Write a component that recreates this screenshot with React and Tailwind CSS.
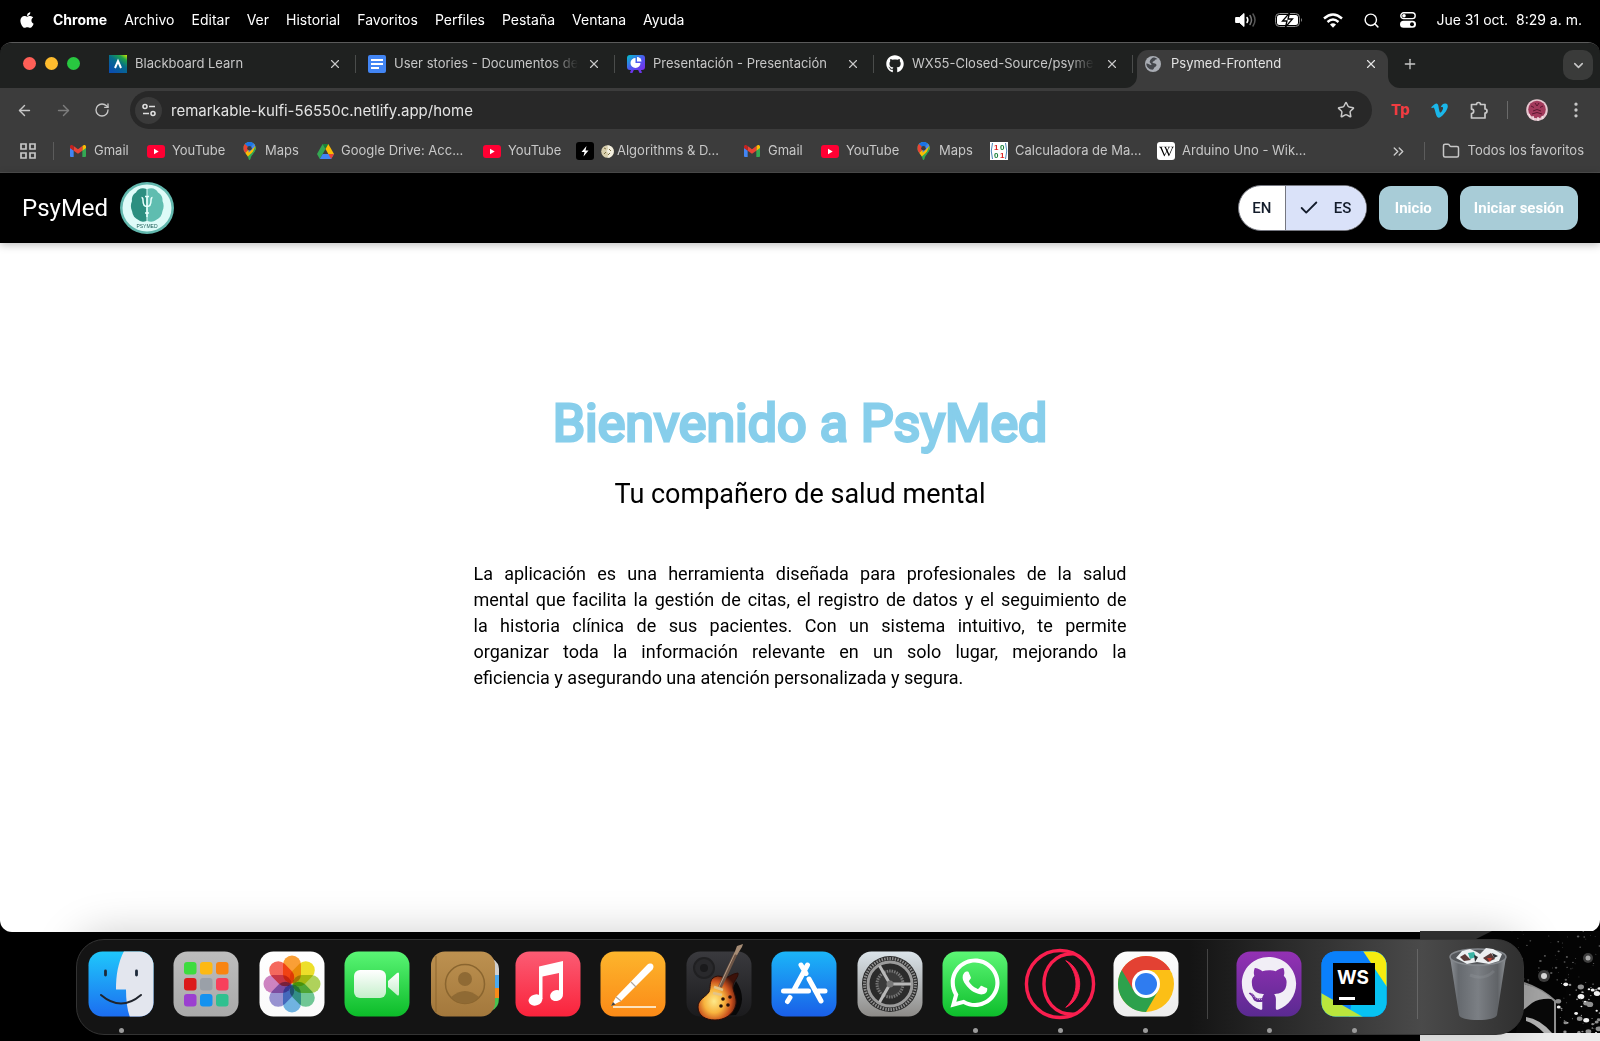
import { FaApple, FaGithub, FaWhatsapp, FaVimeoV, FaWikipediaW } from "react-icons/fa";
import { ArrowLeft, ArrowRight, Check, ChevronDown, ChevronsRight, EllipsisVertical, Folder, Plus, RotateCw, Search, Star, X } from "lucide-react";

/* ---------- small brand marks ---------- */

const Gmail = () => (
  <svg viewBox="0 0 24 18" className="w-4 h-3">
    <path d="M0 3v13.500a1.500 1.500 0 0 0 1.500 1.500H5.500V8L0 4z" fill="#4285f4" />
    <path d="M18.500 18h4a1.500 1.500 0 0 0 1.500-1.500V3l-5.500 4z" fill="#34a853" />
    <path d="M18.500 1.500V8.500L24 4.400V2.500C24 .2 21.500-.8 19.700.6z" fill="#fbbc04" />
    <path d="M5.500 8.500v-7L12 6.300l6.500-4.800v7L12 13.300z" fill="#ea4335" />
    <path d="M0 2.500v1.900l5.500 4.100v-7L4.300.6C2.500-.8 0 .2 0 2.500z" fill="#c5221f" />
  </svg>
);

const YouTube = () => (
  <svg viewBox="0 0 18 13" className="w-[18px] h-[13px]">
    <rect width="18" height="13" rx="3" fill="#ff0033" />
    <path d="M7 3.800v5.400l4.700-2.700z" fill="#fff" />
  </svg>
);

const Maps = () => (
  <svg viewBox="0 0 14 20" className="w-[13px] h-[18px]">
    <clipPath id="pin">
      <path d="M7 0a7 7 0 0 1 7 7c0 4-3.500 5.500-5.500 10-.5 1.200-.5 3-1.500 3s-1-1.800-1.500-3C3.500 12.500 0 11 0 7a7 7 0 0 1 7-7z" />
    </clipPath>
    <g clipPath="url(#pin)">
      <rect width="14" height="20" fill="#34a853" />
      <path d="M0 14L14 1v7L3 18z" fill="#fbbc04" />
      <path d="M6 8l7-7 1 3-8 8z" fill="#4285f4" />
      <path d="M0 0h14L7 7z" fill="#4285f4" />
      <path d="M0 0l7 7-6 7-1-3z" fill="#ea4335" />
      <path d="M2 2l5 5 6-7H5z" fill="#1a73e8" />
      <path d="M14 3v6l-7 11z" fill="#34a853" />
    </g>
    <circle cx="7" cy="7" r="2.500" fill="#3c3c3c" />
  </svg>
);

const Drive = () => (
  <svg viewBox="0 0 24 21" className="w-[17px] h-[15px]">
    <path d="M8 0h8l-4 7z" fill="#188038" />
    <path d="M8 0L0 14l4 7 8-14z" fill="#34a853" />
    <path d="M16 0l8 14h-8L12 7z" fill="#fbbc04" />
    <path d="M8 14h16l-4 7H4z" fill="#4285f4" />
    <path d="M16 14h8l-4 7z" fill="#ea4335" />
  </svg>
);

const Bolt = () => (
  <svg viewBox="0 0 18 18" className="w-[18px] h-[18px]">
    <rect width="18" height="18" rx="3" fill="#000" />
    <path d="M10.500 4L5.500 10h3l-1 4.500 5-6h-3z" fill="#fff" />
  </svg>
);

const Matrix = () => (
  <svg viewBox="0 0 18 18" className="w-[18px] h-[18px]" fontFamily="Liberation Sans" fontSize="8" fontWeight="700">
    <rect width="18" height="18" fill="#fff" />
    <path d="M2.500 1Q0 9 2.500 17M15.500 1Q18 9 15.500 17" stroke="#4b86b8" fill="none" />
    <text x="4" y="8" fill="#d22">1</text>
    <text x="10" y="8" fill="#188038">0</text>
    <text x="4" y="16" fill="#188038">0</text>
    <text x="10" y="16" fill="#d22">1</text>
  </svg>
);

const Wiki = () => (
  <span className="flex w-[18px] h-[18px] items-center justify-center rounded-[3px] bg-white text-black">
    <FaWikipediaW size={15} />
  </span>
);

const Coin = () => (
  <svg viewBox="0 0 13 13" className="w-[13px] h-[13px] shrink-0">
    <circle cx="6.500" cy="6.500" r="6.300" fill="#d8cfae" />
    <path d="M6.500 .2a6.300 6.300 0 0 1 0 12.600L7.500 9l-2-3 1.500-2z" fill="#f4f0e0" />
    <path d="M3 3l2 1M3 9l2-2M8 4l2 2M7 10l2-2" stroke="#7d7145" />
  </svg>
);

/* ---------- tab icons ---------- */

const Blackboard = () => (
  <svg viewBox="0 0 18 18" className="w-[18px] h-[18px]">
    <defs>
      <linearGradient id="bb" x1="1" y1="0" x2="0.300" y2="1">
        <stop offset="0" stopColor="#d7e600" />
        <stop offset=".22" stopColor="#1fa34a" />
        <stop offset=".5" stopColor="#066d8a" />
        <stop offset="1" stopColor="#0a4fae" />
      </linearGradient>
    </defs>
    <rect width="18" height="18" fill="url(#bb)" />
    <path d="M6 13L9 6l3 7" stroke="#fff" strokeWidth="2" fill="none" />
  </svg>
);

const Docs = () => (
  <svg viewBox="0 0 18 18" className="w-[18px] h-[18px]">
    <rect width="18" height="18" rx="2" fill="#4285f4" />
    <path d="M3 5h12M3 9h12M3 13h8" stroke="#fff" strokeWidth="2" />
  </svg>
);

const Slides = () => (
  <svg viewBox="0 0 18 18" className="w-[18px] h-[18px]">
    <defs>
      <linearGradient id="sl" x1="0" y1="0" x2="1" y2="1">
        <stop offset="0" stopColor="#00c4cc" />
        <stop offset=".5" stopColor="#4a5cf0" />
        <stop offset="1" stopColor="#7d2ae8" />
      </linearGradient>
    </defs>
    <path d="M6 14l-2 4M12 14l2 4" stroke="#6a35ea" strokeWidth="2.500" />
    <rect width="18" height="15" rx="3" fill="url(#sl)" />
    <path d="M8.500 3a5 5 0 1 0 5 5h-5z" fill="#fff" />
    <path d="M10 2a4.500 4.500 0 0 1 4.500 4.500H10z" fill="#fff" />
  </svg>
);

const Globe = () => (
  <svg viewBox="0 0 16 16" className="w-4 h-4">
    <circle cx="8" cy="8" r="8" fill="#a9adb4" />
    <path d="M8 1.500c2 0 3.500.6 4.500 1.500-1 .5-2.500.3-2.700 1.300-.2 1.200-2.300.7-2.300 2.200 0 1 2.500.5 3.500 1.500.9 1 .5 2.200-.7 2.700-1.300.4-1.300 2.800-2.800 3C4 13.500 1.300 11 1.300 7.500 3 7 4.500 8.500 6 9c1 .4.300-1.500-.7-2C4 6.300 5 3 8 1.500z" fill="#44474c" />
  </svg>
);

/* ---------- menu bar status ---------- */

const Volume = () => (
  <svg viewBox="0 0 22 16" className="w-[22px] h-4" fill="none" strokeLinecap="round" strokeWidth="1.500">
    <path d="M1 5.500h3.500L9 1.500v13L4.500 10.500H1z" fill="#fff" stroke="#fff" strokeLinejoin="round" strokeWidth="1" />
    <path d="M12 5.500q1.700 2.500 0 5" stroke="#fff" />
    <path d="M15 3.500q3 4.500 0 9" stroke="#777" />
    <path d="M18 2q4 6 0 12" stroke="#555" />
  </svg>
);

const Battery = () => (
  <svg viewBox="0 0 28 14" className="w-7 h-3.5">
    <rect x=".5" y=".5" width="24" height="13" rx="4" fill="none" stroke="#8a8a8a" />
    <rect x="2" y="2" width="21" height="10" rx="2.500" fill="#fff" />
    <path d="M26 5q2 2 0 4z" fill="#8a8a8a" />
    <path d="M14.500 0L7.500 8h4.500l-1.500 6 7-8H13z" fill="#fff" stroke="#000" strokeWidth="1.300" />
  </svg>
);

const Wifi = () => (
  <svg viewBox="0 0 20 15" className="w-5 h-[15px]" fill="none" stroke="#fff" strokeWidth="2.400">
    <path d="M1 5.500q9-8 18 0" />
    <path d="M4.500 9q5.500-4.800 11 0" />
    <path d="M7 11.500q3-2.500 6 0L10 14.700z" fill="#fff" stroke="none" />
  </svg>
);

const ControlCenter = () => (
  <svg viewBox="0 0 16 16" className="w-4 h-4">
    <rect x=".8" y=".8" width="14.400" height="5.800" rx="2.900" fill="none" stroke="#fff" strokeWidth="1.400" />
    <circle cx="4" cy="3.700" r="1.800" fill="#fff" />
    <rect y="8.800" width="16" height="7" rx="3.500" fill="#fff" />
    <circle cx="12" cy="12.300" r="2" fill="#000" />
  </svg>
);

/* ---------- toolbar drawings ---------- */

const Tune = () => (
  <svg viewBox="0 0 16 16" className="w-4 h-4" fill="none" stroke="#dedede" strokeWidth="1.600">
    <circle cx="4" cy="4.500" r="2" />
    <path d="M8 4.500h6M2 11.500h6" />
    <circle cx="12" cy="11.500" r="2" />
  </svg>
);

const Puzzle = () => (
  <svg viewBox="0 0 20 20" className="w-5 h-5" fill="none" stroke="#c9c9c9" strokeWidth="1.700" strokeLinejoin="round">
    <path d="M2.500 4.500H7.500a2 2 0 0 1 4 0H16V9a2 2 0 0 1 0 4v5H2.500v-4.500a2.200 2.200 0 0 0 0-4.400z" />
  </svg>
);

const Avatar = () => (
  <svg viewBox="0 0 22 22" className="w-[22px] h-[22px]">
    <circle cx="11" cy="11" r="10.800" fill="#e6c6cf" />
    <circle cx="11" cy="10.500" r="8.800" fill="#a33a5c" />
    <path d="M5 7l3 1.500M17 7l-3 1.500M7 12q4-3 8 0M6 15q5-3 10 0M9 4l2 3 2-3" stroke="#5c1731" fill="none" />
    <path d="M3 15l1.500 4M7 17l.5 4M12 18v4M16 17l1 3" stroke="#f3dfe4" strokeWidth="1.400" />
  </svg>
);

const GridIcon = () => (
  <svg viewBox="0 0 16 16" className="w-4 h-4" fill="none" stroke="#c7c7c7" strokeWidth="1.700">
    <path d="M1 1h5v5H1zM10 1h5v5h-5zM1 10h5v5H1zM10 10h5v5h-5z" />
  </svg>
);

const PsyLogo = () => (
  <svg viewBox="0 0 54 52" className="w-[54px] h-[52px]">
    <ellipse cx="27" cy="26" rx="27" ry="26" fill="#62b8ae" />
    <ellipse cx="27" cy="26" rx="24.500" ry="23.500" fill="#defbf8" />
    <path d="M26.500 7C22 5 17.500 7 16 10.500c-3 1.500-4.500 5-4 8.500-1.500 3-1.500 7 0 10 .5 4.500 3 7.500 6.500 9 2.500 2 5 2 8 1z" fill="#2c8f80" />
    <path d="M27.500 7C32 5 36.500 7 38 10.500c3 1.500 5 5 4.500 8.500 1.500 3 1.500 7 0 10-.5 4.500-3 7.500-6.500 9-2.500 2-5.500 2-8.500 1z" fill="#5fbdb0" />
    <path d="M27 14v21M21.500 15.500c1.500 0 1.500 1 1.500 3 0 4 1 6 4 6s4-2 4-6c0-2 0-3 1.500-3M25 14.500h4M25 31h4" stroke="#e8fffc" strokeWidth="1.500" fill="none" />
    <text x="27" y="46" textAnchor="middle" fontFamily="Liberation Sans" fontSize="5" fill="#1d5d57">PSYMED</text>
  </svg>
);

/* ---------- dock drawings ---------- */

const Tile = ({ id, from, to, children }) => (
  <svg viewBox="0 0 66 66" className="w-[66px] h-[66px] overflow-visible">
    <defs>
      <linearGradient id={id} x1="0" y1="0" x2="0" y2="1">
        <stop offset="0" stopColor={from} />
        <stop offset="1" stopColor={to} />
      </linearGradient>
      <clipPath id={id + "Clip"}>
        <rect x=".5" y=".5" width="65" height="65" rx="14" />
      </clipPath>
    </defs>
    <rect x=".5" y=".5" width="65" height="65" rx="14" fill={`url(#${id})`} />
    {children}
  </svg>
);

const Finder = () => (
  <Tile id="finder" from="#1fc8fb" to="#1c6df0">
    <path clipPath="url(#finderClip)" d="M36 0C30 12 28 24 28 38.500h10c0 10 1 20 4 28h25V0z" fill="#e3e6ee" />
    <path d="M17.500 20v4M48.500 20v4" stroke="#1d2a3a" strokeWidth="2.800" strokeLinecap="round" />
    <path d="M13 44q20 17 40 0" stroke="#20242c" strokeWidth="2" fill="none" strokeLinecap="round" />
  </Tile>
);

const launchColors = ["#3ddc3f", "#fdb913", "#f98410", "#dc1a1a", "#9aa0a8", "#f83f5b", "#9b3fd0", "#1492ef", "#2fc08f"];
const Launchpad = () => (
  <Tile id="launch" from="#bdbdbd" to="#a9a9a9">
    {launchColors.map((c, i) => (
      <rect key={c} x={11 + (i % 3) * 16} y={11 + Math.floor(i / 3) * 16} width="12.500" height="12.500" rx="3" fill={c} />
    ))}
  </Tile>
);

const petals = ["#fb9620", "#ecdd12", "#a9d04a", "#62c58c", "#63aee3", "#8f88d0", "#cb78bd", "#f5594c"];
const Photos = () => (
  <Tile id="photos" from="#ffffff" to="#fafafa">
    {petals.map((c, i) => (
      <rect key={c} x="24" y="4.500" width="18" height="28" rx="9" fill={c} opacity=".9" transform={`rotate(${i * 45} 33 33)`} style={{ mixBlendMode: "multiply" }} />
    ))}
  </Tile>
);

const FaceTime = () => (
  <Tile id="facetime" from="#5af575" to="#0cbc29">
    <defs>
      <linearGradient id="cam" x1="0" y1="0" x2="0" y2="1">
        <stop offset="0" stopColor="#fff" />
        <stop offset="1" stopColor="#c5efcb" />
      </linearGradient>
    </defs>
    <rect x="10" y="19" width="32" height="28" rx="6" fill="url(#cam)" />
    <path d="M44 30l9-8q2-1.500 2 1v20q0 2.500-2 1l-9-8z" fill="url(#cam)" />
  </Tile>
);

const Contacts = () => (
  <svg viewBox="0 0 68 66" className="ml-1 w-[68px] h-[66px]">
    <defs>
      <linearGradient id="contacts" x1="0" y1="0" x2="0" y2="1">
        <stop offset="0" stopColor="#bd9150" />
        <stop offset="1" stopColor="#a3783c" />
      </linearGradient>
    </defs>
    <path d="M52 8h10q6 4 6 10v8H52z" fill="#d0d0d0" />
    <path d="M52 24h16v13H52z" fill="#4aa9f0" />
    <path d="M52 37h16v10H52z" fill="#f98a18" />
    <path d="M52 47h16q0 10-8 13h-8z" fill="#45c350" />
    <rect x="0" y=".5" width="64" height="65" rx="14" fill="url(#contacts)" />
    <path d="M5 5v56" stroke="#8d662f" />
    <circle cx="34" cy="33" r="19.500" fill="none" stroke="#8a652f" strokeWidth="1.500" />
    <circle cx="34" cy="28" r="7" fill="#8f6a34" />
    <path d="M20 46q14-12 28 0-6 6.500-14 6.500t-14-6.500z" fill="#8f6a34" />
  </svg>
);

const Music = () => (
  <Tile id="music" from="#fb5c74" to="#fa233b">
    <path d="M24 15.500L48 10v33.500h-4V22L27.500 25.500V48h-3.500z" fill="#fff" />
    <ellipse cx="20.500" cy="49" rx="7" ry="5.500" fill="#fff" transform="rotate(-15 20.500 49)" />
    <ellipse cx="41.500" cy="44.500" rx="6.500" ry="5.500" fill="#fff" transform="rotate(-15 41.500 44.500)" />
  </Tile>
);

const Pages = () => (
  <Tile id="pages" from="#fdb52c" to="#fb8a17">
    <path d="M13 56h43" stroke="#fde3bd" strokeWidth="2" />
    <path d="M11 55l5-9L47 14c4-3.500 8.500 0 5.500 4.500L21 50z" fill="#fff" />
    <path d="M16 46l5 4M31 31l5 5" stroke="#b0a59a" strokeWidth="1.200" />
    <path d="M11 55l2-4 2.500 2.500z" fill="#444" />
  </Tile>
);

const Guitar = () => (
  <Tile id="guitar" from="#3a3a3e" to="#1b1b1d">
    <defs>
      <radialGradient id="burst" cx=".4" cy=".6" r=".62">
        <stop offset="0" stopColor="#fde98a" />
        <stop offset=".4" stopColor="#f8b43e" />
        <stop offset=".7" stopColor="#c9501d" />
        <stop offset="1" stopColor="#3c120a" />
      </radialGradient>
    </defs>
    <circle cx="18" cy="17" r="10" fill="#29292c" stroke="#202022" strokeWidth="2" />
    <circle cx="18" cy="17" r="4" fill="#1a1a1c" />
    <path d="M50 30q12 18 0 34l-16 1z" fill="#080808" />
    <path d="M27 27c4-3 8-2 11 0 4 0 9-5 14-5 1 4-5 8-5 14 0 5 4 10 3 17-2 11-12 16-21 16S12 65 12 56c0-8 8-10 11-15 2-4 0-11 4-14z" fill="url(#burst)" stroke="#2a0d08" strokeWidth="1" />
    <path d="M27 42l9 2M28 36l9 3" stroke="#e3c489" strokeWidth="2.500" />
    <path d="M34 36L50 2" stroke="#6d5546" strokeWidth="4" />
    <path d="M33 36L49 2" stroke="#b59a84" strokeWidth="1" />
    <path d="M48 3l3-8 6-2-1 3-5 8z" fill="#a58b74" />
    <circle cx="37" cy="48" r="1.800" fill="#25110a" />
    <circle cx="44" cy="46" r="1.800" fill="#25110a" />
    <circle cx="42" cy="54" r="1.800" fill="#25110a" />
    <circle cx="35" cy="55" r="1.800" fill="#25110a" />
  </Tile>
);

const AppStore = () => (
  <Tile id="appstore" from="#1bb5f8" to="#1a5fe8">
    <g stroke="#fff" strokeWidth="5" strokeLinecap="round" fill="none">
      <path d="M36.500 14L23.500 38M30 14l5 8.500M38 28l12 22M12.500 40h25M47 40h7M19 46.500l-2.500 4" />
    </g>
  </Tile>
);

const Settings = () => (
  <Tile id="settings" from="#dbe4ea" to="#8d8b88">
    <circle cx="33" cy="33" r="28" fill="#2b2b2b" />
    <circle cx="33" cy="33" r="25.500" fill="none" stroke="#8f8f8f" strokeWidth="3" strokeDasharray="1.500 1.200" />
    <circle cx="33" cy="33" r="22" fill="none" stroke="#9c9c9c" strokeWidth="3" />
    <circle cx="33" cy="33" r="13" fill="#3a3a3a" stroke="#777" strokeWidth="3" strokeDasharray="1.500 1" />
    <path d="M33 33h21M33 33L22.500 14.800M33 33L22.500 51.200" stroke="#b8b8b8" strokeWidth="3" />
    <circle cx="33" cy="33" r="3.500" fill="#777" />
  </Tile>
);

const WhatsApp = () => (
  <Tile id="whatsapp" from="#5cf675" to="#0dbe2b">
    <FaWhatsapp x="5" y="4" size={56} color="#fff" />
  </Tile>
);

const Opera = () => (
  <svg viewBox="0 0 74 74" className="w-[72px] h-[72px]" fill="none" stroke="#fa1e4e">
    <circle cx="37" cy="37" r="34.500" strokeWidth="3.500" />
    <path d="M52 6C10 4 10 70 52 68" strokeWidth="3.500" />
    <path d="M43 13C62 22 62 52 43 61 57 48 57 26 43 13z" fill="#fa1e4e" strokeWidth="1" />
  </svg>
);

const Chrome = () => (
  <Tile id="chrome" from="#fdfdfd" to="#ececec">
    <circle cx="33" cy="33" r="28" fill="#fcbf16" />
    <path d="M8.750 19A28 28 0 0 0 33 61L45.100 40 33 33z" fill="#2da14c" />
    <path d="M8.750 19A28 28 0 0 1 57.250 19H33L33 33 20.900 40z" fill="#e34133" />
    <circle cx="33" cy="33" r="14" fill="#fff" />
    <circle cx="33" cy="33" r="11" fill="#2f7cf0" />
  </Tile>
);

const GitHubDesktop = () => (
  <Tile id="ghd" from="#9431b4" to="#5a2a91">
    <FaGithub x="5" y="5" size={56} color="#f1eef6" />
  </Tile>
);

const WebStorm = () => (
  <Tile id="ws" from="#0a7bff" to="#00cdd7">
    <g clipPath="url(#wsClip)">
      <rect width="66" height="66" fill="#0a80fb" />
      <path d="M40 0h26v66H28z" fill="#07c3f2" />
      <path d="M0 0h46l6 12H0z" fill="#0a80fb" />
      <path d="M42 0h24v36z" fill="#f6ec10" />
      <path d="M0 42l42 24H0z" fill="#b9e53c" />
    </g>
    <rect x="12" y="12" width="42" height="42" fill="#000" />
    <text x="16" y="33" fontFamily="Inter" fontWeight="700" fontSize="19" fill="#fff">WS</text>
    <rect x="18" y="46" width="16" height="3" fill="#fff" />
  </Tile>
);

const Trash = () => (
  <svg viewBox="0 0 66 78" className="w-[66px] h-[78px]">
    <defs>
      <linearGradient id="bin" x1="0" y1="0" x2="1" y2="0">
        <stop offset="0" stopColor="#8d9196" />
        <stop offset=".15" stopColor="#666a6f" />
        <stop offset=".5" stopColor="#7b7f84" />
        <stop offset=".85" stopColor="#606367" />
        <stop offset="1" stopColor="#8d9195" />
      </linearGradient>
    </defs>
    <path d="M4 12L13 70q2 5 19 5t19-5l9-58z" fill="url(#bin)" />
    <ellipse cx="32" cy="12" rx="28" ry="8" fill="#55585c" stroke="#85898e" strokeWidth="1.500" />
    <path d="M10 13l6-7 8-2 7 3 3 2 6-6 7 1 9 5-3 7-10 3-12-2-10 2z" fill="#eceff1" />
    <path d="M14 12l5-3 6 6-7 1zM37 13l8-5 4 6-7 3z" fill="#5b3a38" />
    <path d="M22 8l6-1 2 5-6 2z" fill="#39b3a4" />
    <path d="M28 10l4 2-3 5zM46 8l6 3-4 2z" fill="#2c3034" />
    <path d="M41 13l5 0-2 4z" fill="#c33c2e" />
    <path d="M24 30q14 6 24-4" stroke="#a3a8ad" strokeWidth="3" fill="none" opacity=".2" />
  </svg>
);

/* Comic-style wallpaper fragment in the lower right corner */
const specks = Array.from({ length: 120 }, (_, i) => {
  const a = Math.abs(Math.sin(i * 12.9898) * 43758.5453) % 1;
  const b = Math.abs(Math.sin(i * 78.233) * 12543.123) % 1;
  const c = Math.abs(Math.sin(i * 39.425) * 9871.77) % 1;
  const low = b > 0.5;
  return { x: low ? 138 + a * 42 : 92 + a * 88, y: b * 102, r: low ? 0.4 + c * c * 2.2 : 0.3 + c * c * 0.8, low };
});
const Wallpaper = () => (
  <svg viewBox="0 0 180 110" className="absolute right-0 bottom-0 w-[180px] h-[110px]">
    <rect width="180" height="110" fill="#040404" />
    <path d="M0 0h72l-16 8H0z" fill="#343434" />
    {specks.map((s, i) => (
      <ellipse key={i} cx={s.x} cy={s.y} rx={s.r * 1.300} ry={s.r} fill={!s.low ? "#5c5c5c" : i % 3 ? "#8f8f8f" : "#f2f2f2"} />
    ))}
    <circle cx="124" cy="45" r="6" fill="#999" opacity=".4" />
    <circle cx="124" cy="45" r="3" fill="#ddd" />
    <circle cx="168" cy="27" r="5" fill="#777" opacity=".5" />
    <circle cx="168" cy="27" r="2.500" fill="#aaa" />
    <path d="M102 52q20 5 32 18 3 16 3 32H96z" fill="#090909" />
    <path d="M104 52q18 6 31 18v32" fill="none" stroke="#8f8f8f" strokeWidth="2" />
    <path d="M104 53q18 5 28 15-12-1-20 4l-10 8z" fill="#a9a9a9" />
    <path d="M106 86q14 2 26 16h-8q-10-10-18-12z" fill="#b5b5b5" />
    <rect y="102" width="180" height="8" fill="#ededed" />
  </svg>
);

/* ---------- data ---------- */

const menus = ["Archivo", "Editar", "Ver", "Historial", "Favoritos", "Perfiles", "Pestaña", "Ventana", "Ayuda"];

const tabs = [
  { title: "Blackboard Learn", icon: <Blackboard /> },
  { title: "User stories - Documentos de", icon: <Docs />, fade: true },
  { title: "Presentación - Presentación", icon: <Slides /> },
  { title: "WX55-Closed-Source/psyme", icon: <FaGithub size={18} color="#fff" />, fade: true },
];

const bookmarks = [
  { label: "Gmail", icon: <Gmail />, width: "w-[78px]" },
  { label: "YouTube", icon: <YouTube />, width: "w-[93px]" },
  { label: "Maps", icon: <Maps />, width: "w-[76px]" },
  { label: "Google Drive: Acc...", icon: <Drive />, width: "w-[167px]" },
  { label: "YouTube", icon: <YouTube />, width: "w-[93px]" },
  { label: "Algorithms & D...", icon: <Bolt />, extra: <Coin />, width: "w-[167px]" },
  { label: "Gmail", icon: <Gmail />, width: "w-[78px]" },
  { label: "YouTube", icon: <YouTube />, width: "w-[93px]" },
  { label: "Maps", icon: <Maps />, width: "w-[76px]" },
  { label: "Calculadora de Ma...", icon: <Matrix />, width: "w-[167px]" },
  { label: "Arduino Uno - Wik...", icon: <Wiki />, width: "w-[167px]" },
];

const dockApps = [
  { name: "Finder", icon: <Finder />, open: true },
  { name: "Launchpad", icon: <Launchpad /> },
  { name: "Fotos", icon: <Photos /> },
  { name: "FaceTime", icon: <FaceTime /> },
  { name: "Contactos", icon: <Contacts /> },
  { name: "Música", icon: <Music /> },
  { name: "Pages", icon: <Pages /> },
  { name: "GarageBand", icon: <Guitar /> },
  { name: "App Store", icon: <AppStore /> },
  { name: "Configuración", icon: <Settings /> },
  { name: "WhatsApp", icon: <WhatsApp />, open: true },
  { name: "Opera", icon: <Opera />, open: true },
  { name: "Chrome", icon: <Chrome />, open: true },
];

const devApps = [
  { name: "GitHub Desktop", icon: <GitHubDesktop />, open: true },
  { name: "WebStorm", icon: <WebStorm />, open: true },
];

const introLines = [
  "La aplicación es una herramienta diseñada para profesionales de la salud",
  "mental que facilita la gestión de citas, el registro de datos y el seguimiento de",
  "la historia clínica de sus pacientes. Con un sistema intuitivo, te permite",
  "organizar toda la información relevante en un solo lugar, mejorando la",
];

/* ---------- sections ---------- */

function MenuBar() {
  return (
    <header className="flex h-[42px] items-center px-[18px] pb-0.5 text-sm text-white">
      <button aria-label="Apple" className="mr-[17px]"><FaApple size={18} /></button>
      <nav className="flex items-center gap-[17px]">
        <button className="font-bold">Chrome</button>
        {menus.map((m) => <button key={m}>{m}</button>)}
      </nav>
      <div className="ml-auto flex items-center">
        <button aria-label="Volumen" className="mr-[18px]"><Volume /></button>
        <button aria-label="Batería" className="mr-5"><Battery /></button>
        <button aria-label="Wi-Fi" className="mr-5"><Wifi /></button>
        <button aria-label="Buscar" className="mr-5"><Search size={17} /></button>
        <button aria-label="Centro de control" className="mr-5"><ControlCenter /></button>
        <time className="whitespace-pre">Jue 31 oct.  8:29 a. m.</time>
      </div>
    </header>
  );
}

function Tab({ title, icon, fade }) {
  return (
    <div className="flex h-[38px] w-[259px] shrink items-center pl-3">
      <button role="tab" aria-selected="false" className="flex min-w-0 flex-1 items-center gap-2">
        <span className="flex w-[18px] shrink-0 justify-center">{icon}</span>
        <span className={fade ? "whitespace-nowrap [mask-image:linear-gradient(to_right,black_86%,transparent)]" : "whitespace-nowrap"}>{title}</span>
      </button>
      <button aria-label={"Cerrar " + title} className="mr-3 flex w-4 justify-center"><X size={14} /></button>
      <span className="h-[18px] w-px bg-[#4a4c4b]" />
    </div>
  );
}

const Flare = ({ flip }) => (
  <svg viewBox="0 0 12 12" className={flip ? "absolute -right-3 bottom-0 w-3 h-3" : "absolute -left-3 bottom-0 w-3 h-3"}>
    <path d={flip ? "M0 0a12 12 0 0 0 12 12H0z" : "M12 0v12H0A12 12 0 0 0 12 0z"} fill="#3c3c3c" />
  </svg>
);

function TabStrip() {
  return (
    <div className="flex h-[45px] items-end bg-[#1f2120] text-[13px] text-[#c7c7c7]">
      <div className="flex h-[45px] w-[97px] shrink-0 items-center gap-[9px] pb-1 pl-[23px]">
        <button aria-label="Cerrar" className="h-[13px] w-[13px] rounded-full bg-[#ff5f57]" />
        <button aria-label="Minimizar" className="h-[13px] w-[13px] rounded-full bg-[#febc2e]" />
        <button aria-label="Ampliar" className="h-[13px] w-[13px] rounded-full bg-[#28c840]" />
      </div>
      <div role="tablist" className="flex min-w-0 items-end">
        {tabs.map((t) => (
          <div key={t.title} className="flex h-[45px] items-center pb-1">
            <Tab {...t} />
          </div>
        ))}
        <div className="relative ml-1 flex h-[38px] w-[251px] items-center rounded-t-[11px] bg-[#3c3c3c] pb-2.5 pl-2 text-[#e3e3e3]">
          <Flare />
          <Flare flip />
          <button role="tab" aria-selected="true" className="flex flex-1 items-center gap-2.5">
            <Globe />
            <span>Psymed-Frontend</span>
          </button>
          <button aria-label="Cerrar Psymed-Frontend" className="mr-[10px]"><X size={14} /></button>
        </div>
      </div>
      <button aria-label="Nueva pestaña" className="mb-4 ml-[14px]"><Plus size={16} /></button>
      <button aria-label="Buscar pestañas" className="mr-[7px] mb-[8px] ml-auto flex h-[30px] w-[30px] items-center justify-center rounded-[10px] bg-[#3a3b3a]">
        <ChevronDown size={15} strokeWidth={2.500} />
      </button>
    </div>
  );
}

function Toolbar() {
  return (
    <div className="flex h-11 items-center bg-[#3c3c3c] pr-3.5 pl-4 text-[#c7c7c7]">
      <button aria-label="Atrás" className="mr-[22px]"><ArrowLeft size={17} /></button>
      <button aria-label="Adelante" className="mr-[22px] text-[#7d7d7d]"><ArrowRight size={17} /></button>
      <button aria-label="Recargar" className="mr-5"><RotateCw size={16} /></button>
      <div className="flex h-[38px] flex-1 items-center rounded-full bg-[#282828] pr-[17px] pl-[5px]">
        <button aria-label="Información del sitio" className="mr-[9px] flex h-[27px] w-[27px] items-center justify-center rounded-full bg-[#3a3a3a]"><Tune /></button>
        <input aria-label="Dirección" defaultValue="remarkable-kulfi-56550c.netlify.app/home" className="h-8 flex-1 bg-transparent text-[15px] text-[#e3e3e3] outline-none" />
        <button aria-label="Añadir a favoritos"><Star size={18} /></button>
      </div>
      <button aria-label="Toolbox" className="ml-[19px] w-[18px] text-[15px] leading-5 font-extrabold text-[#f03c41]">Tp</button>
      <button aria-label="Vimeo" className="ml-[21px] text-[#1ab7ea]"><FaVimeoV size={19} /></button>
      <button aria-label="Extensiones" className="ml-5"><Puzzle /></button>
      <span className="mx-[18px] h-[18px] w-px bg-[#6a6a6a]" />
      <button aria-label="Perfil"><Avatar /></button>
      <button aria-label="Menú" className="ml-[18px]"><EllipsisVertical size={20} /></button>
    </div>
  );
}

function Bookmarks() {
  return (
    <nav className="flex h-[41px] items-center border-b border-[#4d4d4d] bg-[#3c3c3c] pr-4 pb-0.5 pl-5 text-[13px] text-[#c7c7c7]">
      <button aria-label="Aplicaciones"><GridIcon /></button>
      <span className="mr-[15px] ml-[17px] h-[18px] w-px bg-[#5c5c5c]" />
      {bookmarks.map((b, i) => (
        <a key={i} href="#favorito" className={"flex items-center gap-[7px] whitespace-nowrap " + b.width}>
          <span className="flex w-[18px] shrink-0 justify-center">{b.icon}</span>
          <span className="flex items-center gap-[3px]">{b.extra}{b.label}</span>
        </a>
      ))}
      <button aria-label="Más favoritos" className="ml-auto"><ChevronsRight size={17} /></button>
      <span className="mx-[17px] h-[18px] w-px bg-[#5c5c5c]" />
      <button className="flex items-center gap-2 whitespace-nowrap"><Folder size={18} /> Todos los favoritos</button>
    </nav>
  );
}

function Page() {
  return (
    <div className="flex flex-1 flex-col bg-white font-[Roboto,sans-serif] text-black">
      <header className="flex h-[70px] items-center bg-black px-[22px] text-white shadow-[0_2px_8px_rgba(0,0,0,0.25)]">
        <span className="mr-3 text-2xl">PsyMed</span>
        <PsyLogo />
        <div role="group" aria-label="Idioma" className="mr-3 ml-auto flex h-[46px] w-[129px] overflow-hidden rounded-full border border-[#757780] bg-white text-[15px] font-medium text-[#131c2b]">
          <button aria-pressed="false" className="w-[46px]">EN</button>
          <button aria-pressed="true" className="flex flex-1 items-center gap-3.5 border-l border-[#757780] bg-[#dae2f9] pl-3">
            <Check size={22} />ES
          </button>
        </div>
        <button className="mr-3 h-11 rounded-xl bg-[#a8ccd7] px-4 text-[15px] font-bold">Inicio</button>
        <button className="h-11 rounded-xl bg-[#a8ccd7] px-[14px] text-[15px] font-bold">Iniciar sesión</button>
      </header>
      <main className="flex flex-1 flex-col items-center pt-[151px]">
        <h1 className="text-[52px] leading-[60px] text-[#87ceeb] [-webkit-text-stroke:3px]">Bienvenido a PsyMed</h1>
        <p className="mt-[22px] text-[27px] leading-9">Tu compañero de salud mental</p>
        <p className="mt-[49px] w-[653px] text-[18px] leading-[26px]">
          {introLines.map((line) => (
            <span key={line} className="block text-justify [text-align-last:justify]">{line} </span>
          ))}
          <span className="block">eficiencia y asegurando una atención personalizada y segura.</span>
        </p>
      </main>
    </div>
  );
}

const DockApp = ({ name, icon, open }) => (
  <button aria-label={name} className="relative flex h-[66px] w-[66px] shrink-0 items-center justify-center">
    <span className="shrink-0">{icon}</span>
    {open && <span className="absolute -bottom-4 h-[5px] w-[5px] rounded-full bg-[#9b9b9b]" />}
  </button>
);

function Dock() {
  return (
    <footer className="relative h-[109px] pt-[7px]">
      <Wallpaper />
      <div className="relative mx-[76px] flex h-24 items-center rounded-[28px] border border-[#333] bg-[linear-gradient(to_right,#141414_77%,#4a4a4a_93%,#303030)] px-[11px] pb-1.5 shadow-[0_-4px_44px_rgba(0,0,0,0.22)]">
        <div className="flex flex-1 justify-between">
          {dockApps.map((a) => <DockApp key={a.name} {...a} />)}
        </div>
        <span className="mr-7 ml-7 h-[70px] w-px bg-[#444]" />
        <div className="flex gap-[19px]">
          {devApps.map((a) => <DockApp key={a.name} {...a} />)}
        </div>
        <span className="mr-7 ml-[30px] h-[70px] w-px bg-[#666]" />
        <DockApp name="Papelera" icon={<Trash />} />
      </div>
    </footer>
  );
}

export default function App() {
  return (
    <div className="flex min-h-screen flex-col bg-black font-[Inter,sans-serif]">
      <MenuBar />
      <section className="flex flex-1 flex-col overflow-hidden rounded-xl border-t border-[#5a5a5a]">
        <TabStrip />
        <Toolbar />
        <Bookmarks />
        <Page />
      </section>
      <Dock />
    </div>
  );
}
